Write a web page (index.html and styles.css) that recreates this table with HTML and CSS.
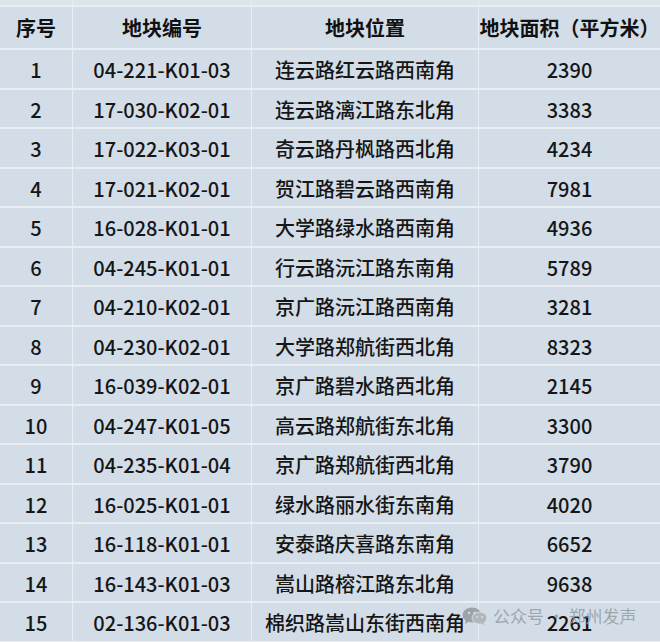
FILE: index.html
```html
<!DOCTYPE html>
<html lang="zh">
<head>
<meta charset="utf-8">
<link rel="stylesheet" href="styles.css">
</head>
<body>
<div class="page">
  <div class="grid">
    <div class="strip"></div><div class="strip"></div><div class="strip"></div><div class="strip"></div>
    <div class="cell head">序号</div><div class="cell head">地块编号</div><div class="cell head">地块位置</div><div class="cell head">地块面积（平方米）</div>
    <div class="cell">1</div><div class="cell">04-221-K01-03</div><div class="cell">连云路红云路西南角</div><div class="cell">2390</div>
    <div class="cell">2</div><div class="cell">17-030-K02-01</div><div class="cell">连云路漓江路东北角</div><div class="cell">3383</div>
    <div class="cell">3</div><div class="cell">17-022-K03-01</div><div class="cell">奇云路丹枫路西北角</div><div class="cell">4234</div>
    <div class="cell">4</div><div class="cell">17-021-K02-01</div><div class="cell">贺江路碧云路西南角</div><div class="cell">7981</div>
    <div class="cell">5</div><div class="cell">16-028-K01-01</div><div class="cell">大学路绿水路西南角</div><div class="cell">4936</div>
    <div class="cell">6</div><div class="cell">04-245-K01-01</div><div class="cell">行云路沅江路东南角</div><div class="cell">5789</div>
    <div class="cell">7</div><div class="cell">04-210-K02-01</div><div class="cell">京广路沅江路西南角</div><div class="cell">3281</div>
    <div class="cell">8</div><div class="cell">04-230-K02-01</div><div class="cell">大学路郑航街西北角</div><div class="cell">8323</div>
    <div class="cell">9</div><div class="cell">16-039-K02-01</div><div class="cell">京广路碧水路西北角</div><div class="cell">2145</div>
    <div class="cell">10</div><div class="cell">04-247-K01-05</div><div class="cell">高云路郑航街东北角</div><div class="cell">3300</div>
    <div class="cell">11</div><div class="cell">04-235-K01-04</div><div class="cell">京广路郑航街西北角</div><div class="cell">3790</div>
    <div class="cell">12</div><div class="cell">16-025-K01-01</div><div class="cell">绿水路丽水街东南角</div><div class="cell">4020</div>
    <div class="cell">13</div><div class="cell">16-118-K01-01</div><div class="cell">安泰路庆喜路东南角</div><div class="cell">6652</div>
    <div class="cell">14</div><div class="cell">16-143-K01-03</div><div class="cell">嵩山路榕江路东北角</div><div class="cell">9638</div>
    <div class="cell">15</div><div class="cell">02-136-K01-03</div><div class="cell">棉织路嵩山东街西南角</div><div class="cell">2261</div>
  </div>
  <div class="watermark">
    <svg class="wx" width="26" height="18" viewBox="0 0 26 18">
      <ellipse cx="10" cy="8" rx="9.5" ry="7.5" fill="#9ea3a8"/>
      <path d="M4 13 L3 17 L8 14 Z" fill="#9ea3a8"/>
      <ellipse cx="17.5" cy="11" rx="7.5" ry="6" fill="#b3b7bb" stroke="#d3dde8" stroke-width="1"/>
      <path d="M21 15 L23 18 L18 16 Z" fill="#b3b7bb"/>
      <circle cx="7" cy="6" r="1.2" fill="#d3dde8"/>
      <circle cx="12.5" cy="6" r="1.2" fill="#d3dde8"/>
      <circle cx="15" cy="10" r="1" fill="#d3dde8"/>
      <circle cx="20" cy="10" r="1" fill="#d3dde8"/>
    </svg>
    <span class="wm-text">公众号 · 郑州发声</span>
  </div>
</div>
</body>
</html>
```
FILE: styles.css
```css
html, body {
  margin: 0;
  padding: 0;
  background: #d3dde8;
}
.page {
  position: relative;
  width: 660px;
  height: 642px;
  overflow: hidden;
  font-family: "Noto Sans CJK SC", "Noto Sans", sans-serif;
  color: #161616;
}
.grid {
  display: grid;
  grid-template-columns: 72px 178px 226px 181px;
  grid-template-rows: 5px 41px repeat(15, 37.5px);
  column-gap: 1px;
  row-gap: 2px;
  background: #e9eef3;
  width: 660px;
  height: 642px;
}
.strip {
  background: #dde5ed;
}
.cell {
  background: #d3dde8;
  display: flex;
  align-items: center;
  justify-content: center;
  font-size: 20px;
  font-weight: 500;
  line-height: 1;
  white-space: nowrap;
  padding-top: 3px;
}
.head {
  font-weight: bold;
  font-size: 20px;
  color: #111111;
  padding-top: 0;
}
.watermark {
  position: absolute;
  left: 462px;
  top: 603px;
  display: flex;
  align-items: center;
  gap: 5px;
  color: rgba(150, 155, 160, 0.85);
  font-size: 17px;
  font-family: "Noto Sans CJK SC", sans-serif;
  pointer-events: none;
}
.wm-text {
  white-space: pre;
}
```
